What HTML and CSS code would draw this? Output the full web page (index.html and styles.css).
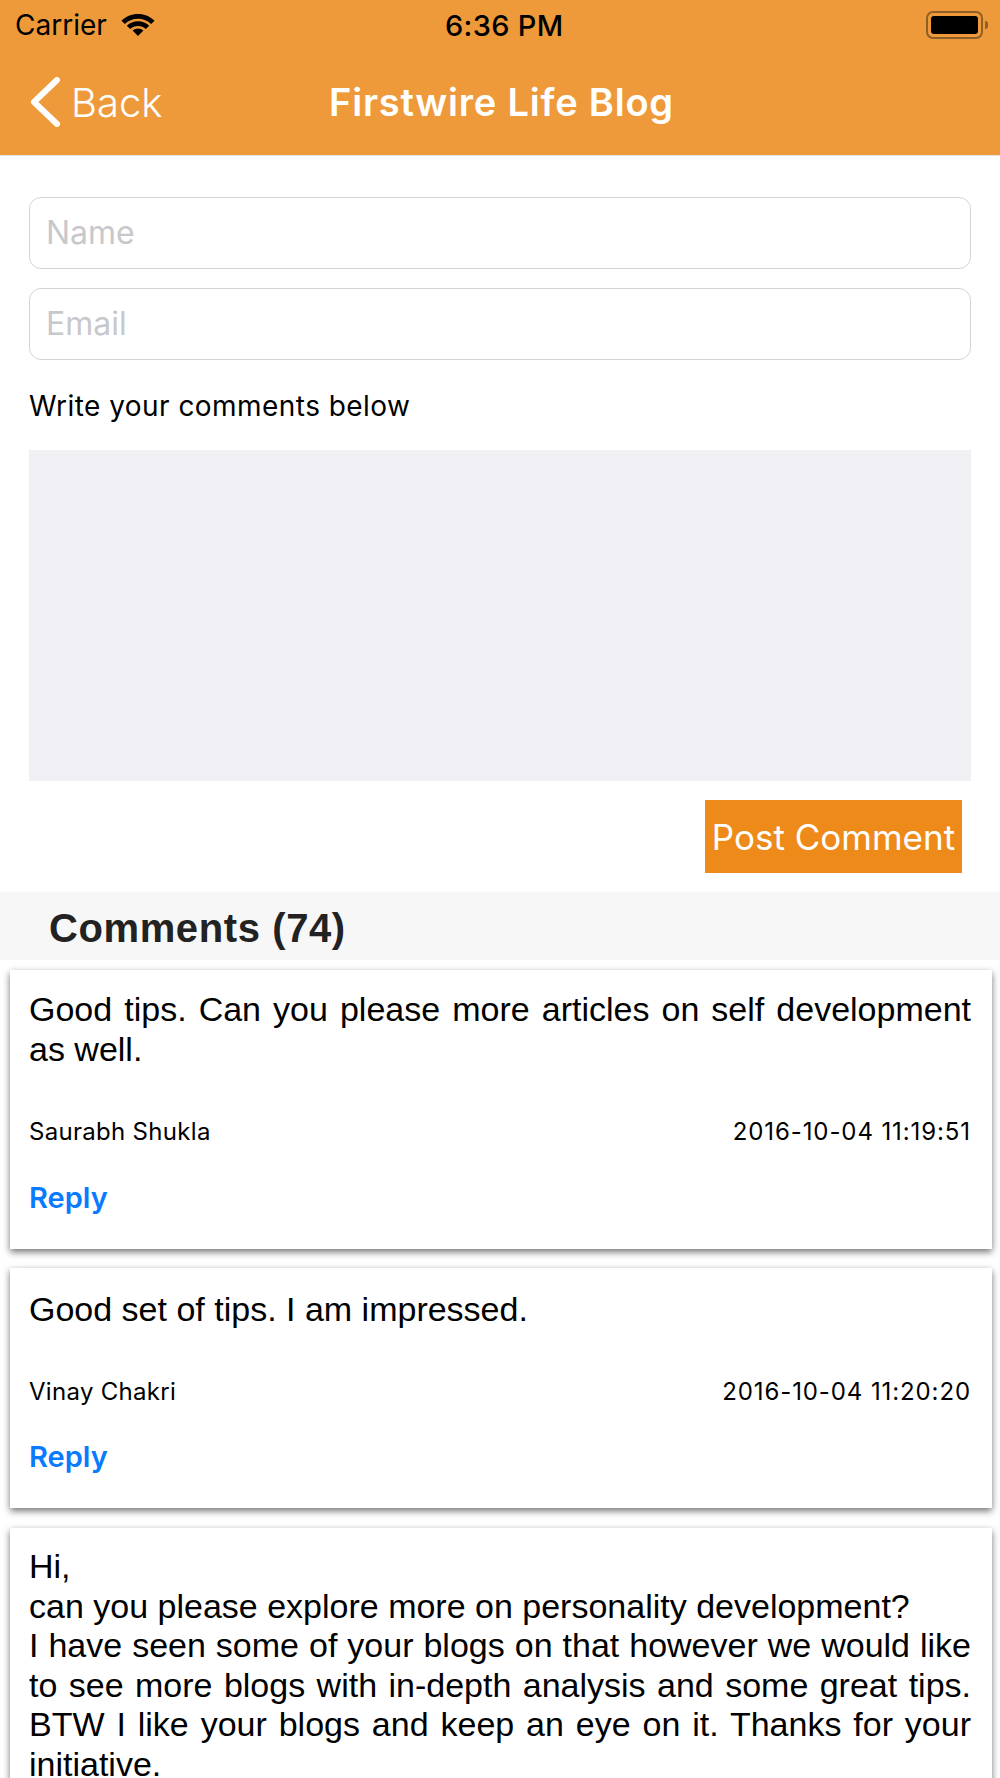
FILE: index.html
```html
<!DOCTYPE html>
<html lang="en">
<head>
  <meta charset="UTF-8">
  <meta name="viewport" content="width=device-width, initial-scale=1.0">
  <title>Firstwire Life Blog</title>
  <link rel="stylesheet" href="styles.css">
</head>
<body>
  <div class="header">
    <div class="status">
      <div class="status-left">
        <span>Carrier</span>
        <svg class="wifi" viewBox="0 0 34 24" width="34" height="24">
          <path d="M17 2C10.500 2 4.700 4.600 .5 8.700L3.800 12C7.200 8.800 11.900 6.800 17 6.800S26.800 8.800 30.200 12L33.500 8.700C29.300 4.600 23.500 2 17 2Z"/>
          <path d="M17 9.200C12.600 9.200 8.700 10.900 5.800 13.700L9.200 17.100C11.200 15.200 14 14 17 14S22.800 15.200 24.800 17.100L28.200 13.700C25.300 10.900 21.400 9.200 17 9.200Z"/>
          <path d="M17 16.400C14.900 16.400 13 17.200 11.600 18.600L17 24L22.400 18.600C21 17.200 19.100 16.400 17 16.400Z"/>
        </svg>
      </div>
      <span class="status-time">6:36 PM</span>
      <div class="battery">
        <div class="battery-body"><div class="battery-fill"></div></div>
        <div class="battery-cap"></div>
      </div>
    </div>
    <div class="nav">
      <div class="back">
        <svg viewBox="0 0 34 50" width="34" height="50">
          <path d="M29 3L6 25L29 47" fill="none" stroke="#fff" stroke-width="6" stroke-linecap="round" stroke-linejoin="round"/>
        </svg>
        <span>Back</span>
      </div>
      <h1>Firstwire Life Blog</h1>
    </div>
  </div>

  <div class="form">
    <input class="field" type="text" placeholder="Name">
    <input class="field" type="text" placeholder="Email">
    <p class="form-label">Write your comments below</p>
    <div class="comment-box"></div>
    <div class="form-actions">
      <button class="post-btn">Post Comment</button>
    </div>
  </div>

  <div class="comments-title">Comments (74)</div>

  <div class="card card-first">
    <p class="card-text">Good tips. Can you please more articles on self development as well.</p>
    <div class="card-meta"><span>Saurabh Shukla</span><span class="card-date">2016-10-04 11:19:51</span></div>
    <div class="reply">Reply</div>
  </div>

  <div class="card card-second">
    <p class="card-text">Good set of tips. I am impressed.</p>
    <div class="card-meta"><span>Vinay Chakri</span><span class="card-date">2016-10-04 11:20:20</span></div>
    <div class="reply">Reply</div>
  </div>

  <div class="card card-third">
    <p class="card-text">Hi,<br>can you please explore more on personality development?<br>I have seen some of your blogs on that however we would like to see more blogs with in-depth analysis and some great tips. BTW I like your blogs and keep an eye on it. Thanks for your initiative.</p>
  </div>
</body>
</html>
```

FILE: styles.css
```css
html, body {
  height: 1778px;
  overflow: hidden;
}

body {
  margin: 0;
  background-color: #fff;
  font-family: "Liberation Sans", Arial, sans-serif;
  color: #000;
}

.header {
  background-color: #ef9a3a;
  height: 156px;
  border-bottom: 1px solid #e4e4e4;
  box-sizing: border-box;
}

.status {
  display: flex;
  align-items: center;
  justify-content: space-between;
  height: 50px;
  padding: 0 12px 0 15px;
  font-family: Inter, sans-serif;
  font-size: 28px;
  position: relative;
}

.status-left {
  display: flex;
  align-items: center;
  gap: 14px;
}

.status-time {
  position: absolute;
  left: 445px;
  font-size: 29px;
  font-weight: 500;
  letter-spacing: 0.3px;
}

.wifi {
  fill: #000;
  margin-bottom: 2px;
}

.battery {
  display: flex;
  align-items: center;
}

.battery-body {
  width: 57px;
  height: 28px;
  box-sizing: border-box;
  border: 2px solid #8f5f26;
  border-radius: 7px;
  padding: 3px;
}

.battery-fill {
  height: 100%;
  background-color: #000;
  border-radius: 3px;
}

.battery-cap {
  width: 3px;
  height: 8px;
  background-color: #8f5f26;
  border-radius: 0 3px 3px 0;
  margin-left: 2px;
}

.nav {
  display: flex;
  align-items: center;
  height: 104px;
  color: #fff;
  font-family: Inter, sans-serif;
  position: relative;
}

.back {
  display: flex;
  align-items: center;
  gap: 9px;
  padding-left: 28px;
  font-size: 40px;
  font-weight: 350;
}

.nav h1 {
  position: absolute;
  left: 329px;
  margin: 0;
  font-size: 38px;
  font-weight: 600;
  letter-spacing: 0.8px;
}

.form {
  padding: 41px 29px 0;
}

.field {
  display: block;
  width: 100%;
  height: 72px;
  box-sizing: border-box;
  margin-bottom: 19px;
  padding: 0 16px 2px;
  border: 1px solid #d4d4d8;
  border-radius: 12px;
  font-family: Inter, sans-serif;
  font-size: 32px;
}

.field::placeholder {
  color: #c8c8cc;
}

.form-label {
  margin: 29px 0 0;
  font-family: Inter, sans-serif;
  font-size: 28px;
  letter-spacing: 0.45px;
  line-height: 34px;
}

.comment-box {
  height: 331px;
  margin-top: 27px;
  background-color: #efeff4;
}

.form-actions {
  display: flex;
  justify-content: flex-end;
  margin-top: 19px;
  padding-right: 9px;
}

.post-btn {
  width: 257px;
  height: 73px;
  padding: 0;
  border: none;
  background-color: #ee8a1a;
  color: #fff;
  font-family: Inter, sans-serif;
  font-size: 35px;
  font-weight: 400;
}

.comments-title {
  margin-top: 19px;
  height: 68px;
  padding-left: 49px;
  background-color: #f7f7f7;
  color: #222;
  font-size: 40px;
  letter-spacing: 0.6px;
  font-weight: bold;
  line-height: 72px;
}

.card {
  margin: 10px 8px 0 10px;
  padding: 20px 21px 0 19px;
  background-color: #fff;
  box-shadow: 0 3px 7px rgba(0, 0, 0, 0.55);
}

.card-first {
  height: 279px;
  box-sizing: border-box;
}

.card-second {
  height: 240px;
  box-sizing: border-box;
  margin-top: 19px;
  padding-top: 22px;
}

.card-second .card-meta {
  margin-top: 47px;
}

.card-second .reply {
  margin-top: 33px;
}

.card-third {
  margin-top: 20px;
  padding-top: 19px;
}

.card-text {
  margin: 0;
  font-size: 34px;
  line-height: 39.5px;
  text-align: justify;
}

.card-meta {
  display: flex;
  justify-content: space-between;
  margin-top: 48px;
  font-family: Inter, sans-serif;
  font-size: 24px;
  letter-spacing: 0.3px;
  line-height: 30px;
}

.card-date {
  letter-spacing: 0.9px;
}

.reply {
  margin-top: 34px;
  color: #0a7aff;
  font-family: Inter, sans-serif;
  font-size: 29px;
  font-weight: 600;
  line-height: 34px;
}
```
